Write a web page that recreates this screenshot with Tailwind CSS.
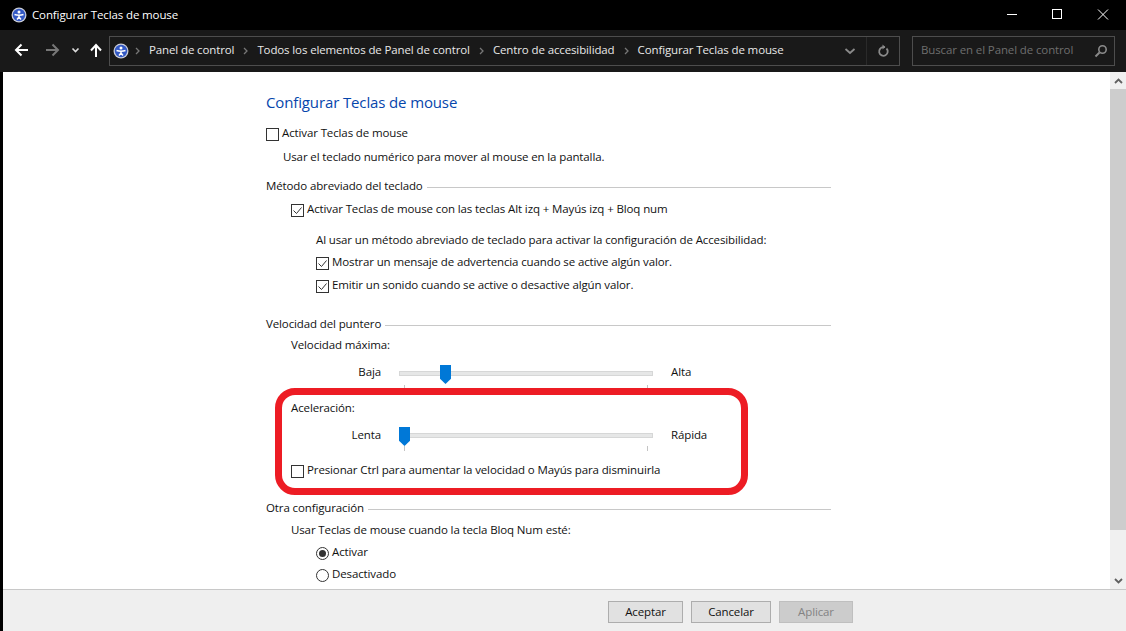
<!DOCTYPE html>
<html lang="es">
  <head>
    <meta charset="UTF-8" />
    <title>Configurar Teclas de mouse</title>
    <script src="https://cdn.jsdelivr.net/npm/@tailwindcss/browser@4"></script>
  </head>
  <body class="w-[1126px] h-[631px] overflow-hidden bg-black font-['Open_Sans','Noto_Sans',sans-serif] text-[11.5px] tracking-[-0.12px] text-[#111]">
    <!-- barra de titulo -->
    <div class="h-[30px] bg-black text-white flex items-center pl-[11px]">
      <svg class="w-[16px] h-[16px] mr-[5px]" viewBox="0 0 16 16"><circle cx="8" cy="8" r="7.500" fill="#c9ccd6"/><circle cx="8" cy="8" r="6.200" fill="#3258c4"/><circle cx="8" cy="5" r="1.500" fill="#fff"/><path d="M3.500 7.500Q8 9 12.500 7.500M8 8v2M8 10l-2 2.500M8 10l2 2.500" stroke="#fff" stroke-width="1.400" fill="none"/></svg>
      <span>Configurar Teclas de mouse</span>
      <div class="ml-auto flex items-center h-full">
        <svg class="w-[46px] h-[30px]" viewBox="0 0 46 30"><path d="M19 14.500h10" stroke="#fff"/></svg>
        <svg class="w-[46px] h-[30px]" viewBox="0 0 46 30"><rect x="18.500" y="9.500" width="9" height="9" fill="none" stroke="#fff"/></svg>
        <svg class="w-[46px] h-[30px]" viewBox="0 0 46 30"><path d="M18 9.500l10 10M28 9.500l-10 10" stroke="#fff"/></svg>
      </div>
    </div>
    <!-- barra de direccion -->
    <div class="h-[42px] bg-[#191919] flex items-center pl-[3px] text-[#e8e8e8]">
      <svg class="w-[105px] h-[42px] shrink-0" viewBox="0 0 105 42">
        <path d="M13 20h12M18.500 14.500L13 20l5.500 5.500" stroke="#fff" stroke-width="2" fill="none"/>
        <path d="M43 20h12M49.500 14.500L55 20l-5.500 5.500" stroke="#777" stroke-width="2" fill="none"/>
        <path d="M69.500 18.500l3 3 3-3" stroke="#ddd" stroke-width="1.600" fill="none"/>
        <path d="M93 27V16M88 20.500l5-5.500 5 5.500" stroke="#fff" stroke-width="2" fill="none"/>
      </svg>
      <div class="w-[791px] h-[30px] shrink-0 border border-[#4d4d4d] flex items-center ml-[1px]">
        <svg class="w-[16px] h-[16px] ml-[3px] mr-[5px]" viewBox="0 0 16 16"><circle cx="8" cy="8" r="7.500" fill="#c9ccd6"/><circle cx="8" cy="8" r="6.200" fill="#3258c4"/><circle cx="8" cy="5" r="1.500" fill="#fff"/><path d="M3.500 7.500Q8 9 12.500 7.500M8 8v2M8 10l-2 2.500M8 10l2 2.500" stroke="#fff" stroke-width="1.400" fill="none"/></svg>
        <svg class="w-[5px] h-[8px] ml-[1px] mr-[9px]" viewBox="0 0 5 8"><path d="M1 1l3 3-3 3" stroke="#777" stroke-width="1.300" fill="none"/></svg>
        <span class="pb-[2px]">Panel de control</span>
        <svg class="w-[5px] h-[8px] mx-[9px]" viewBox="0 0 5 8"><path d="M1 1l3 3-3 3" stroke="#777" stroke-width="1.300" fill="none"/></svg>
        <span class="pb-[2px]">Todos los elementos de Panel de control</span>
        <svg class="w-[5px] h-[8px] mx-[9px]" viewBox="0 0 5 8"><path d="M1 1l3 3-3 3" stroke="#777" stroke-width="1.300" fill="none"/></svg>
        <span class="pb-[2px]">Centro de accesibilidad</span>
        <svg class="w-[5px] h-[8px] mx-[9px]" viewBox="0 0 5 8"><path d="M1 1l3 3-3 3" stroke="#777" stroke-width="1.300" fill="none"/></svg>
        <span class="pb-[2px]">Configurar Teclas de mouse</span>
        <div class="ml-auto flex h-full items-center">
          <svg class="w-[33px] h-[28px]" viewBox="0 0 33 28"><path d="M12.500 12l4.500 4 4.500-4" stroke="#8a8a8a" stroke-width="1.800" fill="none"/></svg>
          <div class="w-[33px] h-full border-l border-[#2a2a2a] flex items-center justify-center">
            <svg class="w-[14px] h-[14px]" viewBox="0 0 14 14"><path d="M10.500 4.500a4.300 4.300 0 1 1-3-1.300H9" stroke="#8a8a8a" stroke-width="1.800" fill="none"/><path d="M6.500 0.500v5l2.800-2.500z" fill="#8a8a8a"/></svg>
          </div>
        </div>
      </div>
      <div class="w-[203px] h-[30px] shrink-0 ml-[12px] border border-[#4d4d4d] flex items-center pl-[8px] pr-[6px] text-[#6e6e6e]">
        <span class="pb-[2px]">Buscar en el Panel de control</span>
        <svg class="w-[14px] h-[14px] ml-auto" viewBox="0 0 14 14"><circle cx="8.500" cy="5.500" r="3.700" stroke="#8a8a8a" stroke-width="1.600" fill="none"/><path d="M5.500 8.500L1.500 12.500" stroke="#8a8a8a" stroke-width="2"/></svg>
      </div>
    </div>
    <!-- contenido -->
    <div class="relative h-[517px] bg-white ml-[3px] flex">
      <div class="flex-1 pl-[263px] pt-[18px]">
        <h1 class="h-[24px] flex items-center text-[15px] tracking-[-0.13px] font-normal text-[#0646ac]">Configurar Teclas de mouse</h1>
        <label class="mt-[9px] h-[20px] flex items-center"><span class="w-[13px] h-[13px] mt-[2px] border border-[#333] mr-[3px]"></span>Activar Teclas de mouse</label>
        <p class="mt-[4px] h-[20px] pl-[17px] flex items-center">Usar el teclado numérico para mover al mouse en la pantalla.</p>

        <div class="mt-[9px] h-[20px] w-[565px] flex items-center gap-[4px]">Método abreviado del teclado<span class="flex-1 h-px bg-[#c8c8c8] mt-[2px]"></span></div>
        <label class="mt-[3px] h-[20px] pl-[25px] flex items-center">
          <svg class="w-[13px] h-[13px] mt-[2px] mr-[3px]" viewBox="0 0 13 13"><rect x=".5" y=".5" width="12" height="12" fill="#fff" stroke="#333"/><path d="M2.500 6.500l3 3 5-6" stroke="#333" fill="none"/></svg>
          Activar Teclas de mouse con las teclas Alt izq + Mayús izq + Bloq num
        </label>
        <p class="mt-[11px] h-[20px] pl-[50px] flex items-center">Al usar un método abreviado de teclado para activar la configuración de Accesibilidad:</p>
        <label class="mt-[2px] h-[20px] pl-[50px] flex items-center">
          <svg class="w-[13px] h-[13px] mt-[2px] mr-[3px]" viewBox="0 0 13 13"><rect x=".5" y=".5" width="12" height="12" fill="#fff" stroke="#333"/><path d="M2.500 6.500l3 3 5-6" stroke="#333" fill="none"/></svg>
          Mostrar un mensaje de advertencia cuando se active algún valor.
        </label>
        <label class="mt-[3px] h-[20px] pl-[50px] flex items-center">
          <svg class="w-[13px] h-[13px] mt-[2px] mr-[3px]" viewBox="0 0 13 13"><rect x=".5" y=".5" width="12" height="12" fill="#fff" stroke="#333"/><path d="M2.500 6.500l3 3 5-6" stroke="#333" fill="none"/></svg>
          Emitir un sonido cuando se active o desactive algún valor.
        </label>

        <div class="mt-[19px] h-[20px] w-[565px] flex items-center gap-[4px]">Velocidad del puntero<span class="flex-1 h-px bg-[#c8c8c8] mt-[2px]"></span></div>
        <p class="mt-[1px] h-[20px] pl-[25px] flex items-center">Velocidad máxima:</p>

        <div class="mt-[7px] h-[20px] flex items-center">
          <span class="w-[115px] text-right">Baja</span>
          <div class="relative w-[254px] h-[20px] ml-[18px]">
            <div class="absolute left-0 right-0 top-[9px] h-[5px] bg-[#e6e7e7] border border-[#d6d7d7]"></div>
            <span class="absolute left-[5px] top-[23px] w-px h-[5px] bg-[#c4c4c4]"></span>
            <span class="absolute left-[248px] top-[23px] w-px h-[5px] bg-[#c4c4c4]"></span>
            <span class="absolute left-[41px] top-[3px] w-[11px] h-[19px] bg-[#0078d7] [clip-path:polygon(0_0,100%_0,100%_72%,50%_100%,0_72%)]"></span>
          </div>
          <span class="ml-[18px]">Alta</span>
        </div>

        <p class="mt-[16px] h-[20px] pl-[25px] flex items-center">Aceleración:</p>
        <div class="mt-[7px] h-[20px] flex items-center">
          <span class="w-[115px] text-right">Lenta</span>
          <div class="relative w-[254px] h-[20px] ml-[18px]">
            <div class="absolute left-0 right-0 top-[8px] h-[5px] bg-[#e6e7e7] border border-[#d6d7d7]"></div>
            <span class="absolute left-[5px] top-[21px] w-px h-[5px] bg-[#c4c4c4]"></span>
            <span class="absolute left-[248px] top-[21px] w-px h-[5px] bg-[#c4c4c4]"></span>
            <span class="absolute left-0 top-[2px] w-[11px] h-[19px] bg-[#0078d7] [clip-path:polygon(0_0,100%_0,100%_72%,50%_100%,0_72%)]"></span>
          </div>
          <span class="ml-[18px]">Rápida</span>
        </div>
        <label class="mt-[15px] h-[20px] pl-[25px] flex items-center"><span class="w-[13px] h-[13px] mt-[2px] border border-[#333] mr-[3px]"></span>Presionar Ctrl para aumentar la velocidad o Mayús para disminuirla</label>

        <div class="mt-[18px] h-[20px] w-[565px] flex items-center gap-[4px]">Otra configuración<span class="flex-1 h-px bg-[#c8c8c8] mt-[2px]"></span></div>
        <p class="mt-[2px] h-[20px] pl-[25px] flex items-center">Usar Teclas de mouse cuando la tecla Bloq Num esté:</p>
        <label class="mt-[2px] h-[20px] pl-[50px] flex items-center"><span class="w-[13px] h-[13px] mt-[2px] rounded-full border border-[#333] mr-[3px] flex items-center justify-center"><span class="w-[7px] h-[7px] rounded-full bg-[#333]"></span></span>Activar</label>
        <label class="mt-[2px] h-[20px] pl-[50px] flex items-center"><span class="w-[13px] h-[13px] mt-[2px] rounded-full border border-[#333] mr-[3px]"></span>Desactivado</label>
      </div>
      <!-- barra de desplazamiento -->
      <div class="w-[16px] flex flex-col bg-[#f0f0f0]">
        <div class="h-[17px] flex items-center justify-center"><svg class="w-[9px] h-[6px]" viewBox="0 0 9 6"><path d="M1 5l3.500-3.500L8 5" stroke="#606060" stroke-width="1.800" fill="none"/></svg></div>
        <div class="h-[441px] bg-[#cdcdcd]"></div>
        <div class="h-[42px]"></div>
        <div class="h-[17px] flex items-center justify-center"><svg class="w-[9px] h-[6px]" viewBox="0 0 9 6"><path d="M1 1l3.500 3.500L8 1" stroke="#606060" stroke-width="1.800" fill="none"/></svg></div>
      </div>
      <!-- marca roja -->
      <div class="absolute left-[272px] top-[316px] w-[473px] h-[107px] border-[7px] border-[#ed1c24] rounded-[20px]"></div>
    </div>
    <!-- botones -->
    <div class="h-[42px] ml-[3px] bg-[#efefef] border-t border-[#c8c8c8] flex items-start pt-[11px] pl-[605px]">
      <button class="w-[75px] h-[22px] bg-[#e1e1e1] border border-[#adadad]">Aceptar</button>
      <button class="w-[80px] h-[22px] ml-[8px] bg-[#e1e1e1] border border-[#adadad]">Cancelar</button>
      <button class="w-[74px] h-[22px] ml-[8px] bg-[#cccccc] border border-[#bfbfbf] text-[#838383]">Aplicar</button>
    </div>
  </body>
</html>
